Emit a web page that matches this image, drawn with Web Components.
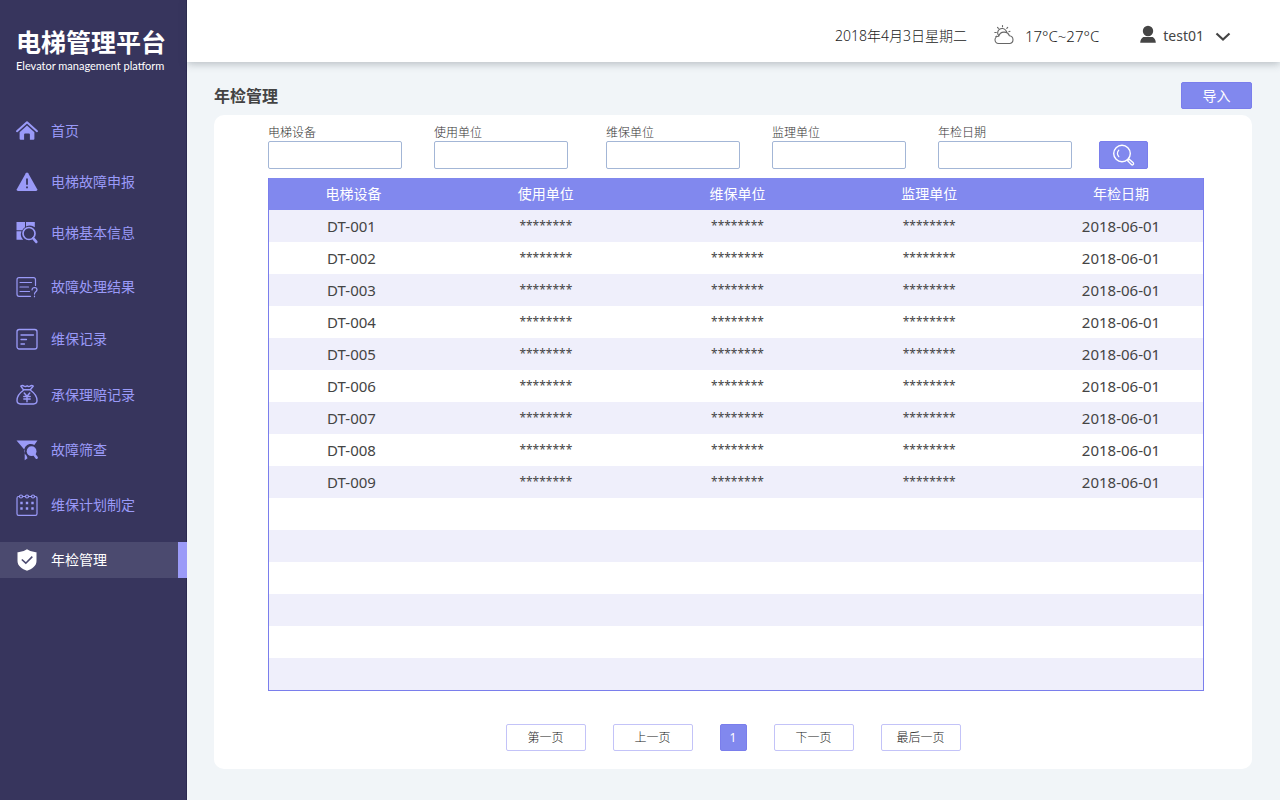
<!DOCTYPE html>
<html lang="zh-CN">
<head>
<meta charset="utf-8">
<meta name="viewport" content="width=device-width, initial-scale=1">
<title>电梯管理平台</title>
<style>
  html, body { margin: 0; }
  body {
    --accent: #8188ee;
    --accent-line: #7a7eec;
    --nav: #9a9af8;
    --side: #37355d;
    font-family: "Noto Sans", "Noto Sans CJK SC", sans-serif;
    font-size: 14px;
    line-height: 20px;
    color: #444;
    background: #f1f5f8;
  }
</style>
</head>
<body>
<elevator-app></elevator-app>

<script>
const define = (name, html) => customElements.define(name, class extends HTMLElement {
  constructor() {
    super();
    this.attachShadow({ mode: "open" });
  }
  connectedCallback() {
    if (this.shadowRoot.childNodes.length) return;
    const t = document.createElement("template");
    t.innerHTML = typeof html === "function" ? html(this) : html;
    this.shadowRoot.append(t.content.cloneNode(true));
  }
});

const icons = {
  home: `<path d="M1 11.2 11 2.2l10 9" fill="none" stroke="currentColor" stroke-width="2" stroke-linecap="round" stroke-linejoin="round"/><path d="M3.6 12.2 11 5.6l7.4 6.6v6.600q0 1-1 1h-3.500v-5.400q0-1-1-1H9.100q-1 0-1 1v5.400H4.600q-1 0-1-1z" fill="currentColor"/>`,
  warn: `<path d="M9.800 2.300q1.200-1.400 2.400 0l9 16q.5 1.700-1.200 1.700H2q-1.700 0-1.200-1.700z" fill="currentColor"/><path d="M11 7.500v6.200M11 15.600v1.700" stroke="#37355d" stroke-width="1.800"/>`,
  info: `<path d="M.5 0H9v5.200A8 8 0 0 0 6.300 8.300H.5zM10 0h8.800v5.300A8 8 0 0 0 10 4.600zM.5 9.300h5a8 8 0 0 0 1.700 8.500H.5z" fill="currentColor"/><circle cx="13" cy="11.500" r="6" fill="none" stroke="currentColor" stroke-width="1.700"/><path d="m17.300 16.300 3 3.600" stroke="currentColor" stroke-width="2.600" stroke-linecap="round"/>`,
  result: `<g fill="none" stroke="currentColor" stroke-width="1.200" stroke-linecap="round"><path d="M14.500 20.300H3Q1 20.300 1 18.300V3.700q0-2 2-2h14.500q2 0 2 2v5.800M4 6.500h11.500M4 11h8.500M4 15.500h9.500"/><path d="M16 13.800q.3-2.300 2.600-2.300 2.400.1 2.400 2.300 0 1.200-1.500 2.200-1 .8-1 2.100M18.500 20.200v.5"/></g>`,
  record: `<g fill="none" stroke="currentColor" stroke-width="1.300" stroke-linecap="round"><rect x="1" y="1.500" width="20" height="19.500" rx="2.200"/><path d="M5 7h12.500M5 11.500h5.500M5 16h3.500"/></g>`,
  money: `<g fill="none" stroke="currentColor" stroke-width="1.400" stroke-linejoin="round" stroke-linecap="round"><path d="M7.500 5.800 4.800 2q1.700-1 3.300.1 1.600.8 3-.4 1.500 1.200 3 .4 1.500-1 3.200-.1l-3 3.800z"/><path d="M7.200 6.500C3.500 9 1 12.500 1 16.600Q1 20 4.500 20h13q3.500 0 3.500-3.400c0-4.100-2.500-7.600-6.200-10.100M8.200 9l2.800 3.300L13.800 9M11 12.300v5.400M7.800 12.500h6.400M7.800 15h6.400"/></g>`,
  filter: `<path d="M.5 1.500h21L18.300 6A6.600 6.600 0 0 0 10.600 16.700l.9 2.600-2.800 2V11z" fill="currentColor"/><circle cx="15.600" cy="12.200" r="4.900" fill="currentColor"/><path d="m18.600 16 2 2.600" stroke="currentColor" stroke-width="2.600" stroke-linecap="round"/>`,
  plan: `<g fill="none" stroke="currentColor" stroke-width="1.200"><path d="M3.500 2.500H2.600Q1 2.500 1 4.200v15.600q0 1.600 1.600 1.600h16.800q1.600 0 1.600-1.600V4.200q0-1.700-1.600-1.700h-.9M6.500 2.500h3M12.500 2.500h3"/><circle cx="5" cy="2.500" r="1.500"/><circle cx="11" cy="2.500" r="1.500"/><circle cx="17" cy="2.500" r="1.500"/></g><path d="M4.300 7.800h2.400v2.400H4.300zM9.800 7.800h2.400v2.400H9.800zM15.300 7.800h2.400v2.400h-2.400zM4.300 13.300h2.400v2.400H4.300zM9.800 13.300h2.400v2.400H9.800zM15.300 13.300h2.400v2.400h-2.400z" fill="currentColor"/>`,
  shield: `<path d="M11 .3Q15 3.400 20.500 3.200V12c0 5-4.500 8-9.500 9.700C6 20 1.500 17 1.500 12V3.200Q7 3.400 11 .3z" fill="currentColor"/><path d="m5.800 10.500 4 3.700 6.500-6.600" fill="none" stroke="#4b4a6f" stroke-width="1.600"/>`,
  weather: `<g fill="none" stroke="#666" stroke-width="1.100" stroke-linecap="round" stroke-linejoin="round"><path d="M4.500 17.500a3.600 3.600 0 0 1 .2-7.200 5.600 5.600 0 0 1 10.700-.5 3.900 3.900 0 0 1 .5 7.700zM4.500 9.500a4.300 4.300 0 0 1 7.200-5.200q.9.900 1.100 2M8.500-.5V.8M3.500 1.300l.9 1M.8 6.500h1.500M13.700 1.300l-.9 1M14.800 5.700l1.200-.4M1.800 10.700l.8-.5"/></g>`,
  user: `<circle cx="9" cy="4" r="5.200" fill="#454545"/><path d="M1.200 15.700q.2-4 3.200-5.600h9.200q3 1.600 3.200 5.600z" fill="#454545"/>`,
  down: `<path d="m1.500 5.500 6.500 6 6.500-6" fill="none" stroke="#444" stroke-width="2.200"/>`,
  search: `<g fill="none" stroke="#fff" stroke-linecap="round"><circle cx="9" cy="9.500" r="8.300" stroke-width="1.400"/><path d="M5.800 6.200a5 5 0 0 0 0 6.500" stroke-width="1.200"/><path d="m14.600 16.800 1.600-1.600 4.100 3.600q.8 1-.1 1.800t-1.800-.1z" stroke-width="1.300"/></g>`
};

define("app-icon", el => {
  const size = el.getAttribute("size") || 22;
  return `<style>:host{display:block;flex:none;line-height:0}svg{display:block;overflow:visible}</style>
  <svg width="${size}" height="${size}" viewBox="0 0 ${size} ${size}" aria-hidden="true">${icons[el.getAttribute("name")]}</svg>`;
});

define("nav-item", el => `
<style>
  :host { display: block; color: var(--nav); }
  :host([active]) { color: #fff; background: #4b4a6f; border-right: 9px solid #9b9bf8; }
  a { display: flex; align-items: center; gap: 13px; height: 36px; padding-left: 16px; color: inherit; text-decoration: none; white-space: nowrap; }
</style>
<a href="#" ${el.hasAttribute("active") ? 'aria-current="page"' : ""}><app-icon name="${el.getAttribute("icon")}"></app-icon><slot></slot></a>`);

define("side-bar", `
<style>
  :host { display: block; background: var(--side); box-shadow: inset -1px 0 #2b2950; }
  .brand { padding: 26px 0 0 16px; color: #fff; white-space: nowrap; }
  h1 { margin: 0; font-size: 25px; line-height: 32px; font-weight: 700; }
  p { margin: 0; font-family: Lato, sans-serif; font-size: 11px; line-height: 16px; }
  nav { display: grid; gap: 18px; padding-top: 39px; }
  .group { display: grid; gap: 15px; }
  .group.mid { gap: 16px; }
  .group.wide { gap: 19px; padding-top: 2px; }
</style>
<div class="brand"><h1>电梯管理平台</h1><p>Elevator management platform</p></div>
<nav>
  <div class="group">
    <nav-item icon="home">首页</nav-item>
    <nav-item icon="warn">电梯故障申报</nav-item>
    <nav-item icon="info">电梯基本信息</nav-item>
  </div>
  <div class="group mid">
    <nav-item icon="result">故障处理结果</nav-item>
    <nav-item icon="record">维保记录</nav-item>
  </div>
  <div class="group wide">
    <nav-item icon="money">承保理赔记录</nav-item>
    <nav-item icon="filter">故障筛查</nav-item>
    <nav-item icon="plan">维保计划制定</nav-item>
    <nav-item icon="shield" active>年检管理</nav-item>
  </div>
</nav>`);

define("top-bar", `
<style>
  :host { display: flex; justify-content: flex-end; align-items: center; box-sizing: border-box; height: 62px; padding: 10px 49px 0 0; background: #fff; box-shadow: 0 2px 8px rgba(60,70,80,.32); white-space: nowrap; }
  .weather, button { display: flex; align-items: center; }
  .weather { gap: 11px; margin: 0 40px 0 27px; }
  time { font-weight: 300; color: #222; }
  .temp { font-size: 15px; font-weight: 300; color: #222; }
  button { gap: 6px; padding: 0; border: 0; background: none; font: inherit; color: inherit; }
  .name { margin-right: 5px; }
</style>
<time datetime="2018-04-03">2018年4月3日星期二</time>
<div class="weather"><app-icon name="weather" size="20"></app-icon><span class="temp">17°C~27°C</span></div>
<button type="button"><app-icon name="user" size="18"></app-icon><span class="name">test01</span><app-icon name="down" size="16"></app-icon></button>`);

define("search-field", `
<style>
  :host { display: block; }
  label { display: block; font-size: 12px; font-weight: 300; line-height: 16px; color: #333; }
  input { display: block; box-sizing: border-box; width: 134px; height: 28px; padding: 0 6px; border: 1px solid #a3b6d6; border-radius: 2px; font: inherit; background: #fff; }
</style>
<label for="field"><slot></slot></label><input id="field" type="text">`);

define("search-form", `
<style>
  :host { display: block; }
  form { display: flex; align-items: flex-end; gap: 27px; }
  .unit, .group { display: flex; }
  .unit { gap: 38px; }
  .group { gap: 32px; }
  button { display: grid; place-items: center; width: 49px; height: 28px; padding: 0; border: 1px solid var(--accent-line); border-radius: 2px; background: var(--accent); }
</style>
<form>
  <div class="unit">
    <div class="group"><search-field>电梯设备</search-field><search-field>使用单位</search-field></div>
    <div class="group"><search-field>维保单位</search-field><search-field>监理单位</search-field><search-field>年检日期</search-field></div>
  </div>
  <button type="button" aria-label="搜索"><app-icon name="search"></app-icon></button>
</form>`);

const rows = Array.from({ length: 15 }, (_, i) => i < 9
  ? `<tr><td>DT-00${i + 1}</td>${"<td class='mask'>********</td>".repeat(3)}<td>2018-06-01</td></tr>`
  : `<tr>${"<td></td>".repeat(5)}</tr>`).join("");

define("inspection-table", `
<style>
  :host { display: block; border: 1px solid var(--accent-line); border-top: 0; }
  table { width: 100%; table-layout: fixed; border-collapse: collapse; }
  th, td { height: 32px; padding: 0; text-align: center; }
  th { color: #fff; font-weight: 400; background: var(--accent); }
  thead tr { box-shadow: inset 0 1px var(--accent-line); }
  td { font-size: 15px; }
  td.mask { font-size: 12px; }
  tbody tr:nth-child(odd) { background: #efeffb; }
  th:first-child { padding-right: 12px; }
  td:first-child { padding-right: 16px; }
  th:last-child, td:last-child { padding-left: 14px; }
  col.first { width: 181px; }
  col.last { width: 178px; }
</style>
<table>
  <colgroup><col class="first"><col><col><col><col class="last"></colgroup>
  <thead><tr><th scope="col">电梯设备</th><th scope="col">使用单位</th><th scope="col">维保单位</th><th scope="col">监理单位</th><th scope="col">年检日期</th></tr></thead>
  <tbody>${rows}</tbody>
</table>`);

define("page-button", `
<style>
  :host { display: block; }
  button { display: block; box-sizing: border-box; width: 80px; height: 27px; padding: 0; border: 1px solid #c3c3f8; border-radius: 2px; background: #fff; color: #222; font: inherit; font-size: 12px; font-weight: 300; line-height: 20px; }
  :host([current]) button { width: 27px; border-color: var(--accent-line); background: var(--accent); color: #fff; font-weight: 400; }
</style>
<button type="button"><slot></slot></button>`);

define("page-nav", `
<style>:host { display: flex; justify-content: center; gap: 27px; padding-right: 6px; }</style>
<page-button>第一页</page-button><page-button>上一页</page-button><page-button current>1</page-button><page-button>下一页</page-button><page-button>最后一页</page-button>`);

define("content-card", `
<style>:host { display: block; padding: 10px 48px 18px 54px; border-radius: 10px; background: #fff; }</style>
<slot></slot>`);

define("elevator-app", `
<style>
  :host { display: grid; grid-template-columns: 187px minmax(0, 1fr); min-height: 100vh; }
  main { padding: 20px 28px 31px 27px; }
  .title { display: flex; align-items: center; justify-content: space-between; margin-bottom: 6px; }
  h2 { margin: 0; font-size: 16px; line-height: 24px; font-weight: 700; }
  .title button { width: 71px; height: 27px; padding: 0; border: 1px solid var(--accent-line); border-radius: 2px; background: var(--accent); color: #fff; font: inherit; }
  inspection-table { margin: 9px 0 33px; }
</style>
<side-bar></side-bar>
<div>
  <top-bar></top-bar>
  <main>
    <div class="title"><h2>年检管理</h2><button type="button">导入</button></div>
    <content-card>
      <search-form></search-form>
      <inspection-table></inspection-table>
      <page-nav></page-nav>
    </content-card>
  </main>
</div>`);
</script>
</body>
</html>
